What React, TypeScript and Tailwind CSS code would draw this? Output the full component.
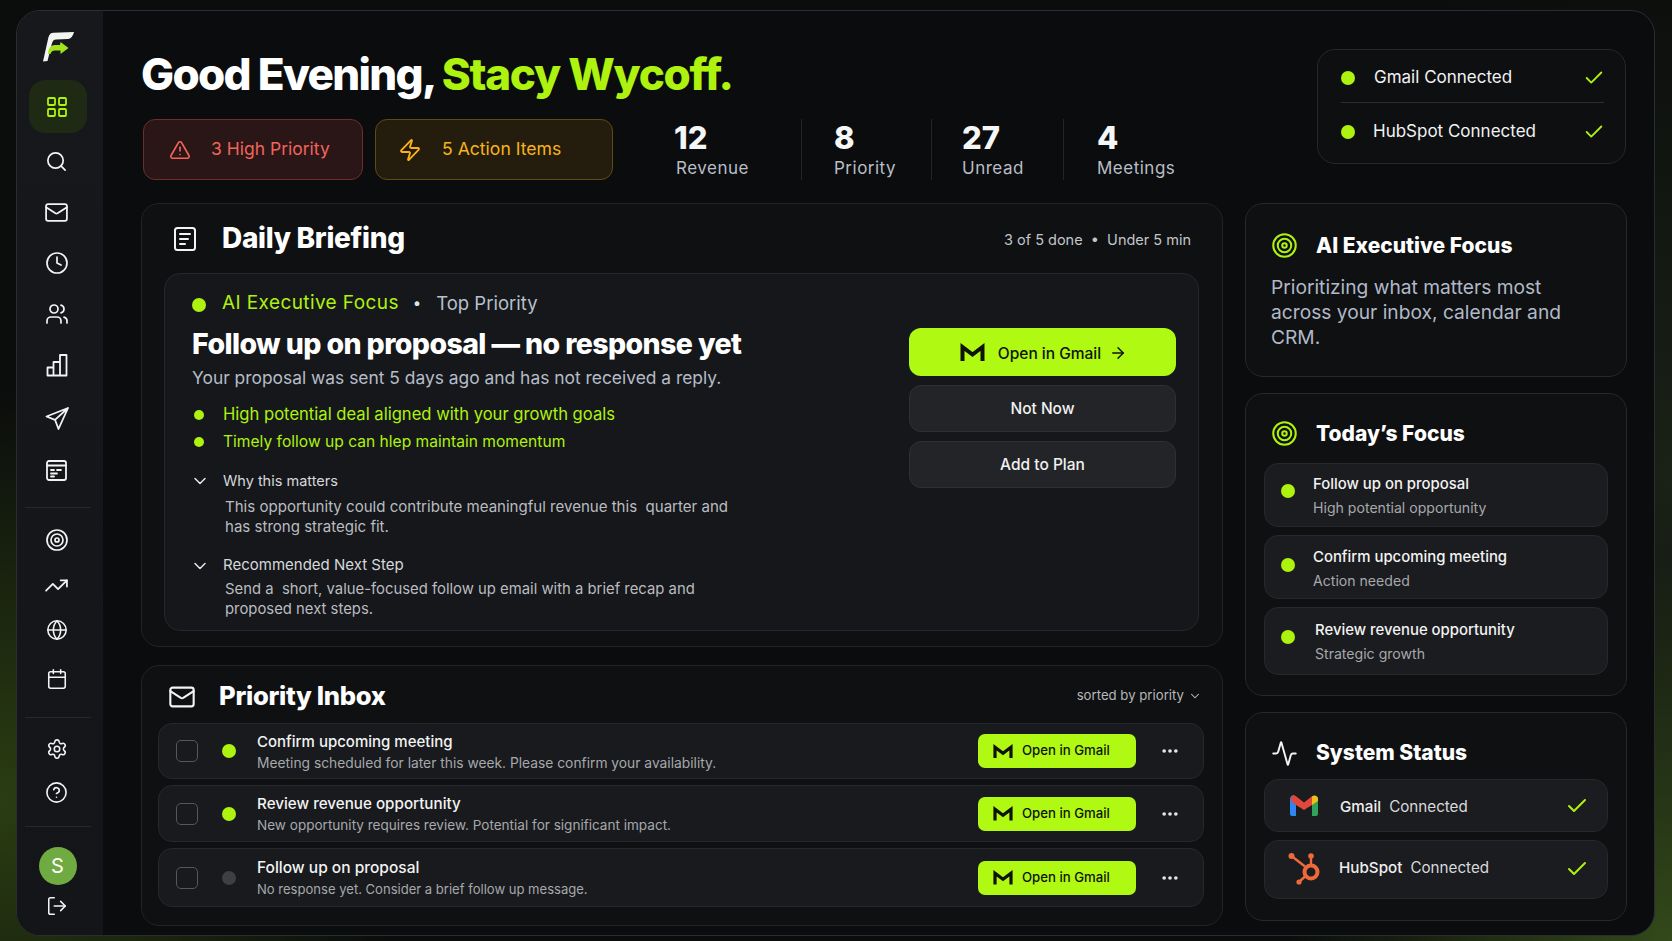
import { ReactNode } from "react";
import {
  Activity,
  ArrowRight,
  Calendar,
  Check,
  ChevronDown,
  CircleHelp,
  Clock,
  Ellipsis,
  Globe,
  LayoutGrid,
  LogOut,
  Mail,
  Search,
  Settings,
  Target,
  TrendingUp,
  TriangleAlert,
  Users,
  Zap,
} from "lucide-react";

function Logo() {
  return (
    <svg width="32" height="30" viewBox="0 0 32 30">
      <path d="M5.500 5 C6.500 2 8 0.800 10.500 0.700 L31 0 C30 3.500 28.500 6.500 25 7 L13 7.500 C11 7.600 10 8.500 9 11 L4.500 29 L0 29.500 Z" fill="#f4f5f2" />
      <path d="M5 22 C5.500 16 8 13 12 13 L17 13 L17.500 10 L25.500 16 L17.500 22 L17.500 18.500 L11.500 18.500 C9.500 18.500 8 20 7.500 22 Z" fill="#a2e41c" />
    </svg>
  );
}

function DocIcon() {
  return (
    <svg width="22" height="24" viewBox="0 0 22 24" fill="none" stroke="#f4f4f4" strokeWidth="2" strokeLinecap="round">
      <rect x="1" y="1" width="20" height="22" rx="2.500" />
      <path d="M6 7H16M6 12H14M6 17H11" />
    </svg>
  );
}

function BarsIcon() {
  return (
    <svg width="22" height="24" viewBox="0 0 22 24" fill="none" stroke="#f2f3f3" strokeWidth="1.8" strokeLinejoin="round">
      <path d="M1.500 22.500V14.500H7.500V22.500ZM7.500 22.500V9H14V22.500ZM14 22.500V2H20.500V22.500ZM1 22.500H21" />
    </svg>
  );
}

function PlaneIcon() {
  return (
    <svg width="24" height="24" viewBox="0 0 24 24" fill="none" stroke="#f2f3f3" strokeWidth="1.8" strokeLinejoin="round" strokeLinecap="round">
      <path d="M23 2 L1.500 10.500 L10 13.800 L13.500 23 Z M23 2 L10 13.800" />
    </svg>
  );
}

function BoardIcon() {
  return (
    <svg width="21" height="21" viewBox="0 0 21 21" fill="none" stroke="#f2f3f3" strokeWidth="1.8" strokeLinecap="round">
      <rect x="1" y="1" width="19" height="19" rx="2" />
      <path d="M1 5.500H20M5 10H8M11 10H15M5 13.500H11M5 16.500H8" />
    </svg>
  );
}

function GmailMono({ size }: { size: number }) {
  return (
    <svg width={size} height={size * 0.72} viewBox="0 0 25 18" fill="none" stroke="#0f1206" strokeWidth="4" strokeLinejoin="miter">
      <path d="M2.500 18V4L12.500 11.500L22.500 4V18" />
    </svg>
  );
}

function GmailColor() {
  return (
    <svg width="28" height="21" viewBox="0 0 28 21" fill="none">
      <path d="M0 4 C0 1 3 -0.500 5.500 1.300 L6 2 V21 H2 C1 21 0 20 0 19 Z" fill="#2f86f2" />
      <path d="M22 2 C24.500 -0.500 28 1 28 4 V19 C28 20 27 21 26 21 H22 Z" fill="#2fa35a" />
      <path d="M1 1.500 C2.500 0 4.500 0 6 1.200 L14 7.500 L22 1.200 L22 10 L14 15 L6 10 L1.200 6 Z" fill="#e2483a" />
      <path d="M22 1.500 C24.500 -0.500 28 1 28 4 V6 L22 10 Z" fill="#f5bb1c" />
    </svg>
  );
}

function HubspotIcon() {
  return (
    <svg width="32" height="33" viewBox="0 0 32 33" fill="none" stroke="#f0693a">
      <circle cx="3.500" cy="4" r="3" fill="#f0693a" stroke="none" />
      <circle cx="23" cy="4" r="2.800" fill="#f0693a" stroke="none" />
      <circle cx="11" cy="30" r="2.600" fill="#f0693a" stroke="none" />
      <path d="M3.500 4L17 14.500M23 4V13M11 30L18 23.500" strokeWidth="2.400" />
      <circle cx="23" cy="20" r="6.500" strokeWidth="4" />
    </svg>
  );
}

function Dot({ className = "" }: { className?: string }) {
  return <span className={`block shrink-0 rounded-full ${className}`} />;
}

function NavItem({ children, height }: { children: ReactNode; height: string }) {
  return <div className={`flex items-center justify-center pr-[2px] ${height}`}>{children}</div>;
}

function Sidebar() {
  const ic = "text-[#f2f3f3]";
  return (
    <aside className="flex w-[86px] shrink-0 flex-col items-center bg-[linear-gradient(180deg,#17181b,#141518)] pt-[21px] pr-[5px]">
      <div className="flex h-[30px] w-full justify-center pl-[3px]">
        <Logo />
      </div>
      <div className="mt-[18px] flex h-[53px] w-[58px] items-center justify-center rounded-[16px] bg-[#1e2a14] pr-[2px]">
        <LayoutGrid size={24} strokeWidth={1.8} className="text-[#aef20f]" />
      </div>
      <NavItem height="mt-[3px] h-[50px]">
        <Search size={23} strokeWidth={1.8} className={ic} />
      </NavItem>
      <NavItem height="h-[52px]">
        <Mail size={25} strokeWidth={1.7} className={ic} />
      </NavItem>
      <NavItem height="h-[50px]">
        <Clock size={24} strokeWidth={1.7} className={ic} />
      </NavItem>
      <NavItem height="h-[51px]">
        <Users size={24} strokeWidth={1.7} className={ic} />
      </NavItem>
      <NavItem height="h-[52px]">
        <BarsIcon />
      </NavItem>
      <NavItem height="h-[53px]">
        <PlaneIcon />
      </NavItem>
      <NavItem height="h-[52px]">
        <BoardIcon />
      </NavItem>
      <div className="mt-[11px] h-px w-[66px] bg-[#26282b]" />
      <NavItem height="mt-[8px] h-[47px]">
        <Target size={24} strokeWidth={1.7} className={ic} />
      </NavItem>
      <NavItem height="h-[45px]">
        <TrendingUp size={25} strokeWidth={1.7} className={ic} />
      </NavItem>
      <NavItem height="h-[43px]">
        <Globe size={22} strokeWidth={1.7} className={ic} />
      </NavItem>
      <NavItem height="h-[55px]">
        <Calendar size={22} strokeWidth={1.7} className={ic} />
      </NavItem>
      <div className="mt-[11px] h-px w-[66px] bg-[#26282b]" />
      <NavItem height="mt-[8px] h-[46px]">
        <Settings size={22} strokeWidth={1.7} className={ic} />
      </NavItem>
      <NavItem height="h-[41px]">
        <CircleHelp size={23} strokeWidth={1.7} className={ic} />
      </NavItem>
      <div className="mt-[13px] h-px w-[66px] bg-[#26282b]" />
      <div className="mt-[20px] flex h-[38px] w-[38px] items-center justify-center rounded-full bg-[#6fab41] text-[20px] text-white">
        S
      </div>
      <NavItem height="mt-[7px] h-[27px]">
        <LogOut size={22} strokeWidth={1.7} className={ic} />
      </NavItem>
    </aside>
  );
}

function Stat({ value, label, className, labelClass = "" }: { value: string; label: string; className: string; labelClass?: string }) {
  return (
    <div className={`flex h-[61px] flex-col ${className}`}>
      <span className="pt-[1px] text-[31px] leading-[36px] font-extrabold text-[#f5f6f6]">{value}</span>
      <span className={`text-[17px] leading-[24px] tracking-[0.500px] text-[#b9bec6] ${labelClass}`}>{label}</span>
    </div>
  );
}

function Header() {
  return (
    <header className="flex h-[131px] justify-between">
      <div>
        <h1 className="h-[50px] text-[44px] leading-[50px] font-extrabold tracking-[-1.700px] whitespace-nowrap text-white">
          Good Evening, <span className="tracking-[-1.300px] text-[#aef20f]">Stacy Wycoff.</span>
        </h1>
        <div className="mt-[20px] ml-[2px] flex items-center">
          <div className="flex h-[61px] w-[220px] items-center rounded-[12px] border border-[#6e2e2c] bg-[#2a1616] pl-[25px] text-[17.500px] text-[#f0645a]">
            <TriangleAlert size={22} strokeWidth={1.8} />
            <span className="ml-[20px]">3 High Priority</span>
          </div>
          <div className="ml-[12px] flex h-[61px] w-[238px] items-center rounded-[12px] border border-[#5f4a16] bg-[#241d0e] pl-[22px] text-[17.600px] text-[#f8b31c]">
            <Zap size={24} strokeWidth={1.8} />
            <span className="ml-[20px]">5 Action Items</span>
          </div>
          <div className="ml-[61px] flex">
            <Stat value="12" label="Revenue" className="w-[127px]" labelClass="pl-[2px]" />
            <Stat value="8" label="Priority" className="w-[130px] border-l border-[#232528] pl-[32px]" />
            <Stat value="27" label="Unread" className="w-[132px] border-l border-[#232528] pl-[30px]" />
            <Stat value="4" label="Meetings" className="w-[130px] border-l border-[#232528] pl-[33px]" />
          </div>
        </div>
      </div>
      <div className="h-[115px] w-[309px] rounded-[18px] border border-[#26282b] bg-[#0e0f11] pr-[21px] pl-[23px] text-[17px] text-[#f1f2f2]">
        <div className="flex h-[52px] items-center pt-[3px]">
          <Dot className="h-[14px] w-[14px] bg-[#aef20f]" />
          <span className="ml-[19px]">Gmail Connected</span>
          <Check size={22} strokeWidth={2} className="mr-[-1px] ml-auto text-[#aef20f]" />
        </div>
        <div className="h-px bg-[#2c2e31]" />
        <div className="flex h-[55px] items-center pt-[2px]">
          <Dot className="h-[14px] w-[14px] bg-[#aef20f]" />
          <span className="ml-[18px]">HubSpot Connected</span>
          <Check size={22} strokeWidth={2} className="mr-[-1px] ml-auto text-[#aef20f]" />
        </div>
      </div>
    </header>
  );
}

function DailyBriefing() {
  return (
    <section className="h-[444px] rounded-[18px] border border-[#222427] bg-[#0f1012] pr-[23px] pl-[22px]">
      <div className="flex h-[69px] items-center">
        <span className="ml-[10px]">
          <DocIcon />
        </span>
        <h2 className="mt-[-2px] ml-[26px] text-[28px] font-extrabold tracking-[-0.3px] text-white">Daily Briefing</h2>
        <span className="mt-[3px] mr-[8px] ml-auto text-[14.500px] text-[#c2c5ca]">3 of 5 done&nbsp; •&nbsp; Under 5 min</span>
      </div>
      <div className="flex h-[358px] justify-between rounded-[16px] border border-[#25272a] bg-[#15171a] pr-[22px] pl-[27px]">
        <div>
          <div className="flex h-[52px] items-center pt-[7px]">
            <Dot className="mt-[3px] h-[14px] w-[14px] bg-[#aef20f]" />
            <span className="ml-[16px] text-[19px] tracking-[0.4px] text-[#aef20f]">AI Executive Focus</span>
            <span className="ml-[14px] text-[15px] text-[#dfe3e8]">•</span>
            <span className="ml-[15px] text-[18.500px] text-[#b9c0cc]">Top Priority</span>
          </div>
          <h3 className="text-[28.500px] leading-[36px] font-extrabold tracking-[-0.6px] whitespace-nowrap text-white">
            Follow up on proposal — no response yet
          </h3>
          <p className="mt-[2px] text-[17.400px] leading-[28px] text-[#b5bcc8]">
            Your proposal was sent 5 days ago and has not received a reply.
          </p>
          <ul className="mt-[9px] text-[#aef20f]">
            <li className="flex h-[27px] items-center text-[16.600px]">
              <Dot className="ml-[2px] h-[10px] w-[10px] bg-[#aef20f]" />
              <span className="ml-[19px]">High potential deal aligned with your growth goals</span>
            </li>
            <li className="flex h-[27px] items-center text-[15.600px]">
              <Dot className="ml-[2px] h-[10px] w-[10px] bg-[#aef20f]" />
              <span className="ml-[19px]">Timely follow up can hlep maintain momentum</span>
            </li>
          </ul>
          <div className="mt-[12px] flex h-[27px] items-center text-[14.500px] text-[#d5d8dc]">
            <ChevronDown size={20} strokeWidth={1.8} className="ml-[-2px] text-[#e8e9ea]" />
            <span className="ml-[13px]">Why this matters</span>
          </div>
          <p className="mt-[3px] ml-[33px] w-[520px] text-[15.050px] leading-[20px] text-[#babcc0]">
            This opportunity could contribute meaningful revenue this&nbsp; quarter and has strong strategic fit.
          </p>
          <div className="mt-[15px] flex h-[27px] items-center text-[15px] text-[#d5d8dc]">
            <ChevronDown size={20} strokeWidth={1.8} className="ml-[-2px] text-[#e8e9ea]" />
            <span className="ml-[13px]">Recommended Next Step</span>
          </div>
          <p className="ml-[33px] w-[480px] text-[14.850px] leading-[20px] text-[#babcc0]">
            Send a&nbsp; short, value-focused follow up email with a brief recap and proposed next steps.
          </p>
        </div>
        <div className="flex w-[267px] flex-col pt-[54px]">
          <button className="flex h-[48px] items-center justify-center rounded-[12px] bg-[#b0f912] pl-[2px] text-[15.500px] font-medium text-[#10130a]">
            <GmailMono size={25} />
            <span className="mt-[3px] ml-[13px]">Open in Gmail</span>
            <ArrowRight size={18} strokeWidth={2} className="mt-[2px] ml-[8px]" />
          </button>
          <button className="mt-[9px] h-[47px] rounded-[12px] border border-[#2e3033] bg-[#232427] pt-[1px] text-[15.500px] font-medium text-[#f0f1f1]">
            Not Now
          </button>
          <button className="mt-[9px] h-[47px] rounded-[12px] border border-[#2e3033] bg-[#232427] text-[15.500px] font-medium text-[#f0f1f1]">
            Add to Plan
          </button>
        </div>
      </div>
    </section>
  );
}

const inboxRows = [
  {
    title: "Confirm upcoming meeting",
    text: "Meeting scheduled for later this week. Please confirm your availability.",
    dot: "bg-[#aef20f]",
    height: "h-[56px]",
    pad: "pt-[2px]",
    titleSize: "text-[15px]",
    textSize: "text-[13.800px]",
  },
  {
    title: "Review revenue opportunity",
    text: "New opportunity requires review. Potential for significant impact.",
    dot: "bg-[#aef20f]",
    height: "h-[57px]",
    pad: "pt-[0px]",
    titleSize: "text-[15.200px]",
    textSize: "text-[13.550px]",
  },
  {
    title: "Follow up on proposal",
    text: "No response yet. Consider a brief follow up message.",
    dot: "bg-[#3d3f42]",
    height: "h-[59px]",
    pad: "pt-[1px]",
    titleSize: "text-[15.500px]",
    textSize: "text-[13.050px]",
  },
];

function PriorityInbox() {
  return (
    <section className="h-[261px] rounded-[18px] border border-[#222427] bg-[#0f1012] pr-[18px] pl-[16px]">
      <div className="flex h-[57px] items-center pt-[4px]">
        <Mail size={28} strokeWidth={1.8} className="ml-[10px] text-[#f4f4f4]" />
        <h2 className="ml-[23px] text-[25.600px] font-extrabold tracking-[-0.3px] text-white">Priority Inbox</h2>
        <span className="mt-[-2px] ml-auto text-[13.200px] text-[#b5b7bb]">sorted by priority</span>
        <ChevronDown size={14} strokeWidth={1.8} className="mt-[-1px] mr-[2px] ml-[4px] text-[#c4c6c9]" />
      </div>
      <div className="flex flex-col gap-[6px]">
        {inboxRows.map((row) => (
          <div
            key={row.title}
            className={`flex items-center rounded-[14px] border border-[#26282b] bg-[#191a1d] pr-[23px] pl-[17px] ${row.height}`}
          >
            <span className="block h-[22px] w-[22px] rounded-[5px] border border-[#55575a]" />
            <Dot className={`ml-[24px] h-[14px] w-[14px] self-center ${row.dot}`} />
            <div className={`ml-[21px] min-w-0 ${row.pad}`}>
              <div className={`leading-[22px] font-medium text-[#f2f3f3] ${row.titleSize}`}>{row.title}</div>
              <div className={`leading-[20px] text-[#a6a8ac] ${row.textSize}`}>{row.text}</div>
            </div>
            <button className="ml-auto flex h-[34px] w-[158px] items-center rounded-[7px] bg-[#b0f912] pl-[15px] text-[13.200px] font-medium text-[#10130a]">
              <GmailMono size={20} />
              <span className="ml-[9px]">Open in Gmail</span>
            </button>
            <Ellipsis size={20} strokeWidth={2.400} className="ml-[24px] text-[#e8e9ea]" />
          </div>
        ))}
      </div>
    </section>
  );
}

const focusRows = [
  { title: "Follow up on proposal", sub: "High potential opportunity", height: "h-[64px]", x: "ml-[18px]", dot: "mt-[-9px]", pad: "pt-[1px]" },
  { title: "Confirm upcoming meeting", sub: "Action needed", height: "h-[64px]", x: "ml-[18px]", dot: "mt-[-4px]", pad: "pt-[3px]" },
  { title: "Review revenue opportunity", sub: "Strategic growth", height: "h-[68px]", x: "ml-[20px]", dot: "mt-[-9px]", pad: "pt-[1px]" },
];

function RightColumn() {
  return (
    <div className="flex w-[382px] shrink-0 flex-col gap-[16px]">
      <section className="h-[174px] rounded-[18px] border border-[#26282b] bg-[#0f1012] pl-[25px]">
        <div className="flex h-[82px] items-center pt-[1px]">
          <Target size={27} strokeWidth={1.8} className="text-[#aef20f]" />
          <h2 className="ml-[18px] text-[21px] font-extrabold text-white">AI Executive Focus</h2>
        </div>
        <p className="mt-[-11px] w-[320px] text-[19.200px] leading-[25px] text-[#b1b9c8]">
          Prioritizing what matters most across your inbox, calendar and CRM.
        </p>
      </section>
      <section className="h-[303px] rounded-[18px] border border-[#26282b] bg-[#0f1012] px-[18px]">
        <div className="flex h-[69px] items-center pt-[10px] pl-[7px]">
          <Target size={27} strokeWidth={1.8} className="text-[#aef20f]" />
          <h2 className="ml-[18px] text-[21px] font-extrabold text-white">Today’s Focus</h2>
        </div>
        <div className="flex flex-col gap-[8px]">
          {focusRows.map((row) => (
            <div key={row.title} className={`flex items-center rounded-[14px] border border-[#26282b] bg-[#1b1c1f] pl-[16px] ${row.height}`}>
              <Dot className={`h-[14px] w-[14px] bg-[#aef20f] ${row.dot}`} />
              <div className={`${row.x} ${row.pad}`}>
                <div className="text-[14.900px] leading-[24px] font-medium text-[#f2f3f3]">{row.title}</div>
                <div className="text-[14.100px] leading-[24px] text-[#a6a8ac]">{row.sub}</div>
              </div>
            </div>
          ))}
        </div>
      </section>
      <section className="h-[209px] rounded-[18px] border border-[#26282b] bg-[#0f1012] px-[18px]">
        <div className="flex h-[66px] items-center pt-[14px] pl-[7px]">
          <Activity size={27} strokeWidth={1.7} className="text-[#f4f4f4]" />
          <h2 className="ml-[18px] text-[21px] font-extrabold text-white">System Status</h2>
        </div>
        <div className="flex h-[53px] items-center rounded-[14px] border border-[#26282b] bg-[#1b1c1f] pr-[18px] pl-[25px] text-[15.200px] text-[#eeeff0]">
          <GmailColor />
          <span className="mt-[3px] ml-[22px] font-medium">Gmail</span>
          <span className="mt-[3px] ml-[8px] text-[#d8d9db]">Connected</span>
          <Check size={24} strokeWidth={2} className="ml-auto text-[#aef20f]" />
        </div>
        <div className="mt-[8px] flex h-[59px] items-center rounded-[14px] border border-[#26282b] bg-[#1b1c1f] pr-[18px] pb-[2px] pl-[23px] text-[15.200px] text-[#eeeff0]">
          <HubspotIcon />
          <span className="ml-[19px] font-medium">HubSpot</span>
          <span className="ml-[8px] text-[#d8d9db]">Connected</span>
          <Check size={24} strokeWidth={2} className="ml-auto text-[#aef20f]" />
        </div>
      </section>
    </div>
  );
}

export default function App() {
  return (
    <div className="h-[941px] w-[1672px] overflow-hidden bg-[#0b0d0c] bg-[radial-gradient(circle_at_0%_85%,#2a3d12_0%,transparent_22%),radial-gradient(circle_at_100%_100%,#33491a_0%,transparent_20%),radial-gradient(circle_at_100%_50%,#1a2116_0%,transparent_30%)] pt-[10px] pr-[17px] pb-[5px] pl-[16px] font-['Inter',sans-serif]">
      <div className="flex h-full overflow-hidden rounded-[24px] border border-[#2b2d30] bg-[#0b0c0e]">
        <Sidebar />
        <main className="min-w-0 flex-1 pt-[38px] pr-[28px] pl-[38px]">
          <Header />
          <div className="mt-[23px] flex gap-[22px]">
            <div className="flex w-[1082px] shrink-0 flex-col gap-[18px]">
              <DailyBriefing />
              <PriorityInbox />
            </div>
            <RightColumn />
          </div>
        </main>
      </div>
    </div>
  );
}
